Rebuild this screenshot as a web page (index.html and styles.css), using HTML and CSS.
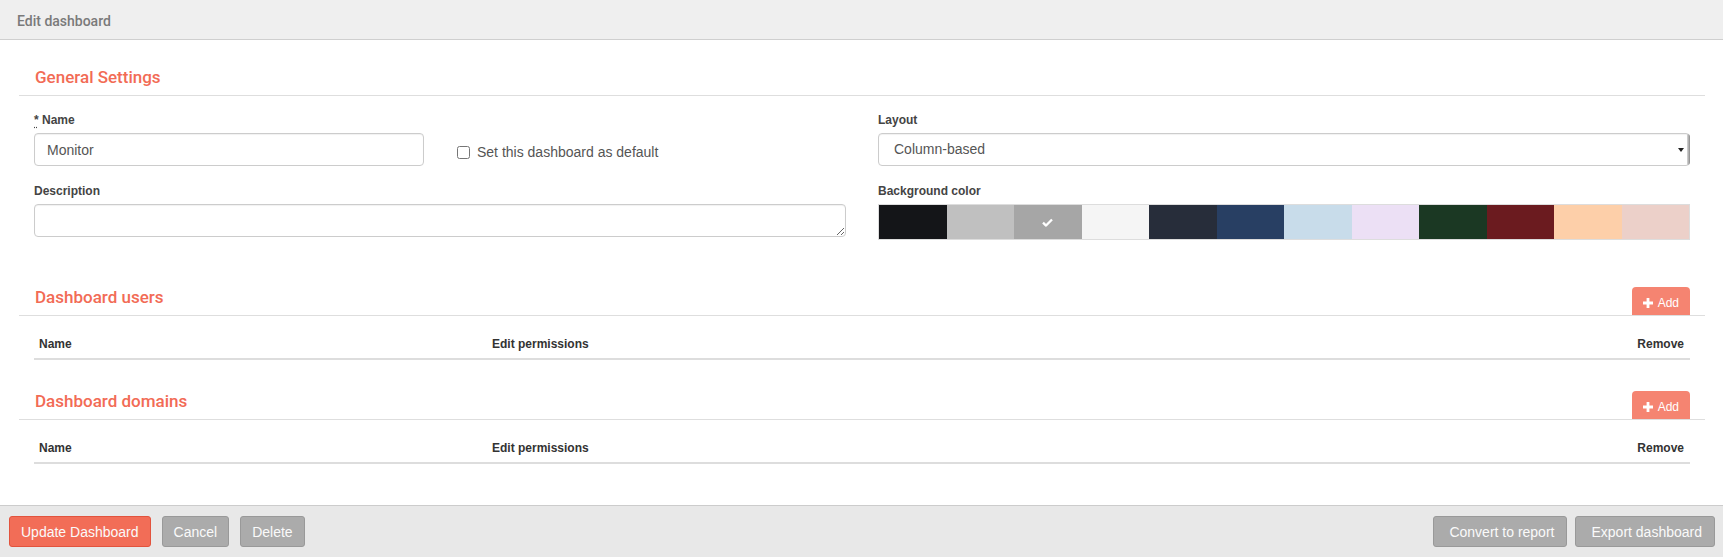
FILE: index.html
```html
<!DOCTYPE html>
<html lang="en">
<head>
<meta charset="utf-8">
<title>Edit dashboard</title>
<link rel="stylesheet" href="styles.css">
</head>
<body>
<header class="topbar">Edit dashboard</header>
<main class="content">
  <section class="panel panel-general">
    <div class="panel-head"><h2>General Settings</h2></div>
    <div class="panel-body form-grid">
      <div class="form-col">
        <div class="split-row">
          <div class="field">
            <label class="field-label"><abbr title="required">*</abbr> Name</label>
            <input class="text-input" type="text" value="Monitor">
          </div>
          <label class="check-line"><input type="checkbox" class="check-box"><span>Set this dashboard as default</span></label>
        </div>
        <div class="field">
          <label class="field-label">Description</label>
          <textarea class="text-area"></textarea>
        </div>
      </div>
      <div class="form-col">
        <div class="field">
          <label class="field-label">Layout</label>
          <div class="select-box">Column-based</div>
        </div>
        <div class="field">
          <label class="field-label">Background color</label>
          <div class="swatches">
            <span class="swatch sw-1"></span>
            <span class="swatch sw-2"></span>
            <span class="swatch sw-3 selected"><svg class="check" viewBox="0 0 12 10" width="11" height="9"><path d="M1 5.2 L4.4 8.4 L11 1.6" fill="none" stroke="#fff" stroke-width="2.6" stroke-linejoin="round"/></svg></span>
            <span class="swatch sw-4"></span>
            <span class="swatch sw-5"></span>
            <span class="swatch sw-6"></span>
            <span class="swatch sw-7"></span>
            <span class="swatch sw-8"></span>
            <span class="swatch sw-9"></span>
            <span class="swatch sw-10"></span>
            <span class="swatch sw-11"></span>
            <span class="swatch sw-12"></span>
          </div>
        </div>
      </div>
    </div>
  </section>

  <section class="panel panel-table">
    <div class="panel-head">
      <h2>Dashboard users</h2>
      <button class="add-btn" type="button"><svg class="plus" viewBox="0 0 10 10" width="10" height="10"><path d="M3.6 0h2.8v3.6H10v2.8H6.4V10H3.6V6.4H0V3.6h3.6z" fill="#fff"/></svg>Add</button>
    </div>
    <div class="panel-body">
      <table class="grid-table">
        <colgroup><col class="c-name"><col><col class="c-remove"></colgroup>
        <thead><tr><th>Name</th><th>Edit permissions</th><th class="right">Remove</th></tr></thead>
      </table>
    </div>
  </section>

  <section class="panel panel-table">
    <div class="panel-head">
      <h2>Dashboard domains</h2>
      <button class="add-btn" type="button"><svg class="plus" viewBox="0 0 10 10" width="10" height="10"><path d="M3.6 0h2.8v3.6H10v2.8H6.4V10H3.6V6.4H0V3.6h3.6z" fill="#fff"/></svg>Add</button>
    </div>
    <div class="panel-body">
      <table class="grid-table">
        <colgroup><col class="c-name"><col><col class="c-remove"></colgroup>
        <thead><tr><th>Name</th><th>Edit permissions</th><th class="right">Remove</th></tr></thead>
      </table>
    </div>
  </section>
</main>
<footer class="footbar">
  <div class="btn-group left">
    <button class="btn btn-primary" type="button">Update Dashboard</button>
    <button class="btn btn-gray" type="button">Cancel</button>
    <button class="btn btn-gray" type="button">Delete</button>
  </div>
  <div class="btn-group right">
    <button class="btn btn-gray wide" type="button">Convert to report</button>
    <button class="btn btn-gray wide" type="button">Export dashboard</button>
  </div>
</footer>
</body>
</html>
```

FILE: styles.css
```css
* { box-sizing: border-box; }

html, body { height: 100%; }

body {
  margin: 0;
  background: #fff;
  font-family: "Liberation Sans", Arial, sans-serif;
  color: #444;
  display: flex;
  flex-direction: column;
  overflow: hidden;
}

.topbar {
  height: 40px;
  padding: 13px 17px 0;
  line-height: 16px;
  background: #efefef;
  border-bottom: 1px solid #cfcfcf;
  font-family: Roboto, "Liberation Sans", sans-serif;
  font-weight: 500;
  font-size: 14px;
  color: #7a7a7a;
  flex: none;
}

.content {
  flex: 1;
  padding-top: 27px;
}

.panel {
  margin: 0 18px 0 19px;
}

.panel + .panel { margin-top: 30px; }

.panel-head {
  height: 29px;
  padding: 0 15px 0 16px;
  border-bottom: 1px solid #dedede;
  display: flex;
  justify-content: space-between;
  align-items: flex-end;
}

.panel-head h2 {
  margin: 0 0 8px;
  font-family: Roboto, "Liberation Sans", sans-serif;
  font-weight: 500;
  font-size: 17px;
  line-height: 20px;
  color: #f26b55;
}

.panel-body {
  padding: 16px 15px 0;
}

.form-grid {
  display: grid;
  grid-template-columns: 1fr 1fr;
  column-gap: 32px;
}

.split-row {
  display: grid;
  grid-template-columns: 1fr 1fr;
  column-gap: 32px;
}

.field {
  margin-bottom: 17px;
}

.field-label {
  display: block;
  font-weight: bold;
  font-size: 12px;
  line-height: 15px;
  padding-top: 1px;
  margin-bottom: 5px;
  color: #444;
}

.field-label abbr {
  text-decoration: underline dotted;
  text-underline-offset: 3px;
}

.text-input,
.text-area,
.select-box {
  display: block;
  width: 100%;
  height: 33px;
  border: 1px solid #cccccc;
  border-radius: 4px;
  box-shadow: inset 0 1px 1px rgba(0, 0, 0, 0.06);
  background: #fff;
  font-family: "Liberation Sans", Arial, sans-serif;
  font-size: 14px;
  color: #555;
}

.text-input {
  padding: 0 12px;
  line-height: 31px;
}

.text-area {
  padding: 6px 12px;
  resize: vertical;
  margin: 0;
}

.check-line {
  align-self: start;
  margin-top: 31px;
  display: flex;
  align-items: center;
  gap: 7px;
  font-size: 14px;
  line-height: 18px;
  color: #555;
  padding-left: 1px;
}

.check-box {
  margin: 0;
  width: 13px;
  height: 13px;
}

.select-box {
  position: relative;
  padding-left: 15px;
  line-height: 31px;
}

.select-box::before {
  content: "";
  position: absolute;
  right: -1px;
  top: 0;
  bottom: 0;
  width: 3px;
  background: linear-gradient(to right, #d8d8d8, #8a8a8a);
  border-radius: 0 3px 3px 0;
}

.select-box::after {
  content: "";
  position: absolute;
  right: 5px;
  top: 14px;
  border-left: 3px solid transparent;
  border-right: 3px solid transparent;
  border-top: 4px solid #222;
}

.swatches {
  display: grid;
  grid-template-columns: repeat(12, 1fr);
  height: 36px;
  border: 1px solid #dddddd;
}

.swatch {
  display: flex;
  align-items: center;
  justify-content: center;
}

.sw-1 { background: #141518; }
.sw-2 { background: #c0c0c0; }
.sw-3 { background: #a6a6a6; }
.sw-4 { background: #f5f5f5; }
.sw-5 { background: #272d3a; }
.sw-6 { background: #283f63; }
.sw-7 { background: #c8dcea; }
.sw-8 { background: #ece0f5; }
.sw-9 { background: #1b3823; }
.sw-10 { background: #6b1b1f; }
.sw-11 { background: #fdcfa9; }
.sw-12 { background: #ecd0c9; }

.check { display: block; }

.add-btn {
  height: 28px;
  padding: 3px 11px 0;
  border: none;
  border-radius: 4px 4px 0 0;
  background: #f58471;
  color: #fff;
  font-family: "Liberation Sans", Arial, sans-serif;
  font-size: 12px;
  display: flex;
  align-items: center;
  gap: 5px;
}

.plus { display: block; }

.panel-table .panel-body {
  padding: 12px 15px 1px;
}

.grid-table {
  width: 100%;
  border-collapse: collapse;
  table-layout: fixed;
}

.c-name { width: 453px; }
.c-remove { width: 160px; }

.grid-table th {
  text-align: left;
  font-weight: bold;
  font-size: 12px;
  line-height: 15px;
  color: #333;
  padding: 9px 6px 6px 5px;
  border-bottom: 2px solid #dddddd;
}

.grid-table th.right { text-align: right; }

.footbar {
  flex: none;
  height: 52px;
  padding: 10px 8px 0 9px;
  background: #e8e8e8;
  border-top: 1px solid #cccccc;
  display: flex;
  justify-content: space-between;
}

.btn-group {
  display: flex;
}

.btn-group.left { gap: 11px; }
.btn-group.right { gap: 8px; }

.btn {
  height: 31px;
  padding: 0 11px;
  border-radius: 3px;
  font-family: "Liberation Sans", Arial, sans-serif;
  font-size: 14px;
  color: #fafafa;
  cursor: pointer;
}

.btn.wide { padding: 0 12px 0 15px; }

.btn-primary {
  background: #f26d57;
  border: 1px solid #e2533d;
}

.btn-gray {
  background: #ababab;
  border: 1px solid #999999;
}
```
